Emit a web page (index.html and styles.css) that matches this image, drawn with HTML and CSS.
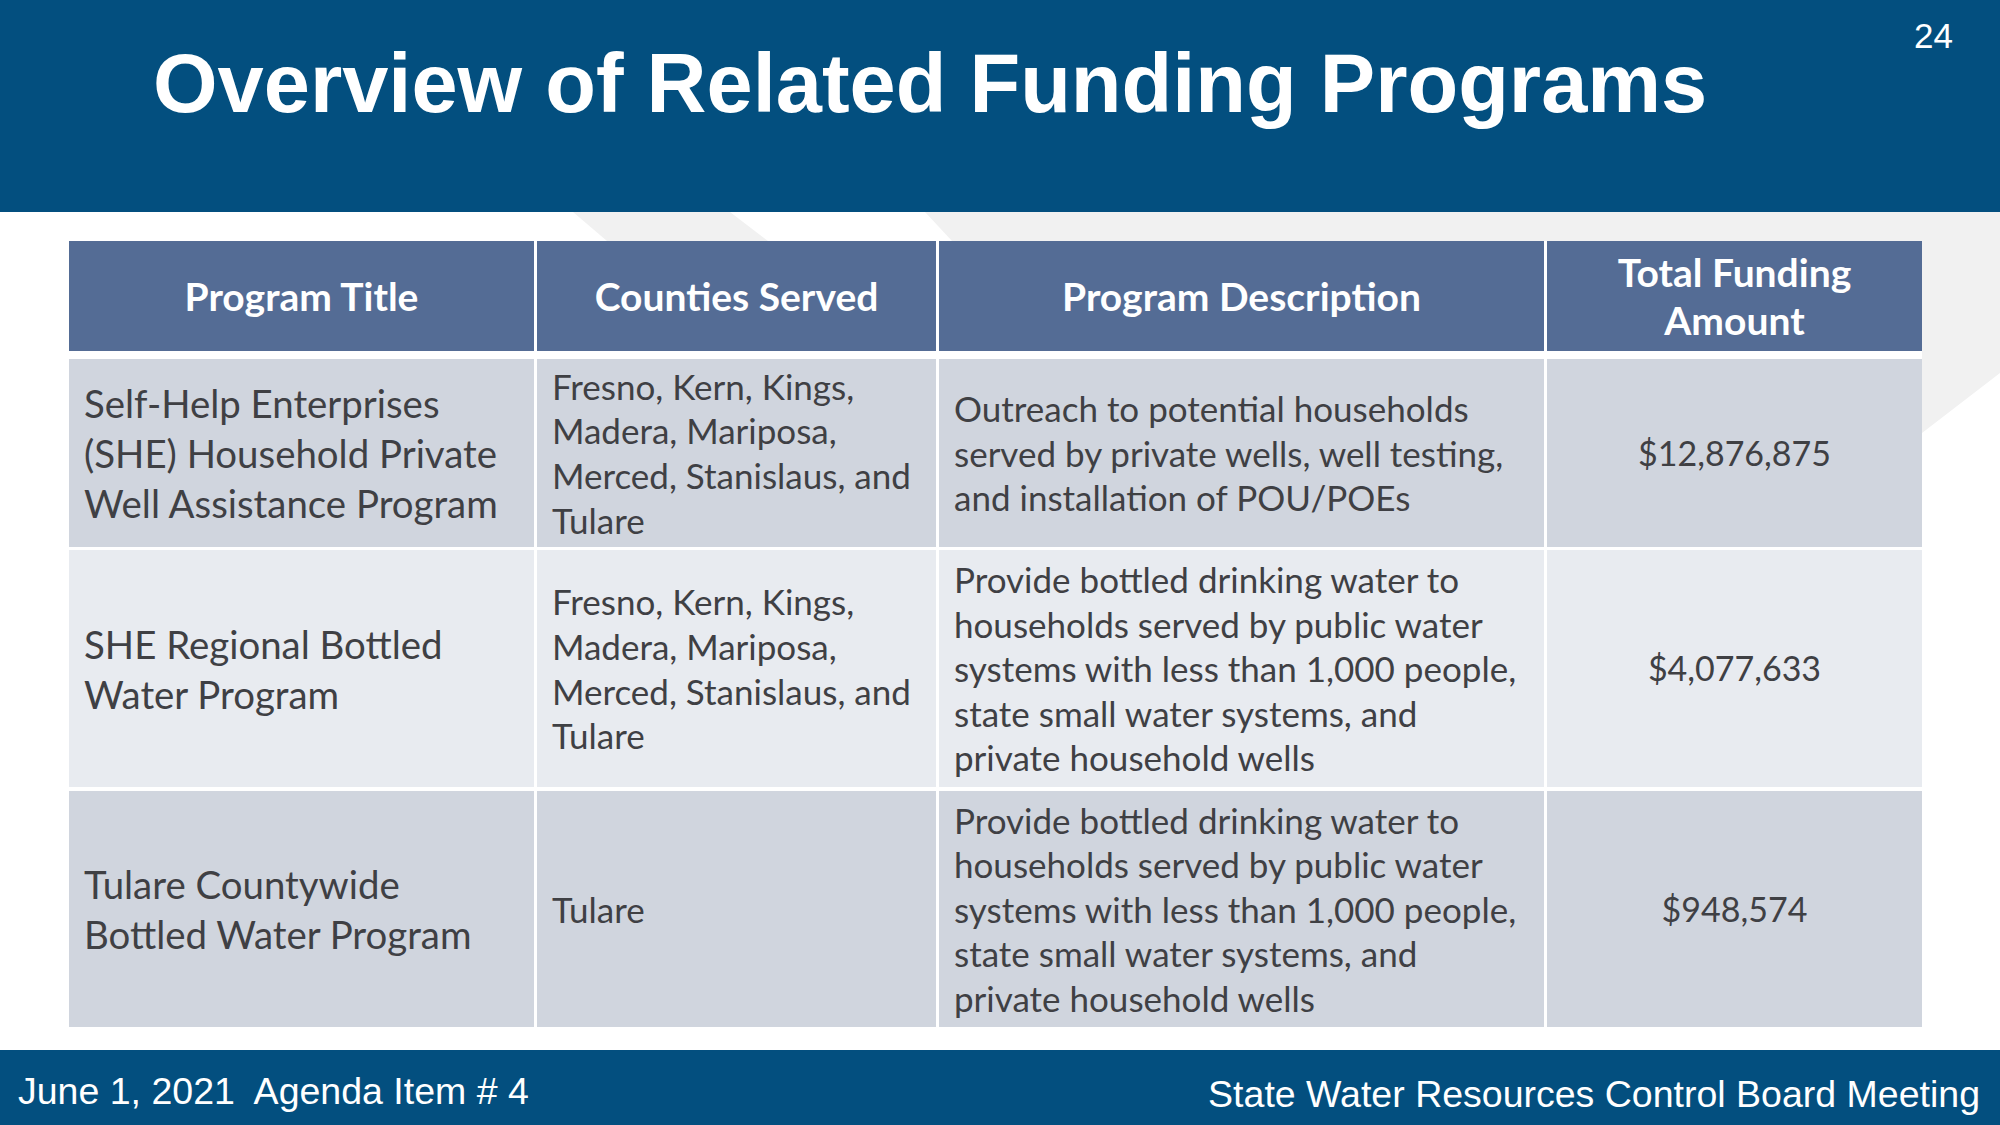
FILE: index.html
```html
<!DOCTYPE html>
<html lang="en">
<head>
<meta charset="utf-8">
<title>Overview of Related Funding Programs</title>
<link rel="stylesheet" href="styles.css">
</head>
<body>
<div class="slide">
  <header class="top">
    <h1 class="title">Overview of Related Funding Programs</h1>
    <div class="page-num">24</div>
  </header>
  <main class="content">
    <svg class="backdrop" width="2000" height="838" viewBox="0 0 2000 838" aria-hidden="true">
      <polygon points="573,0 730,0 768,29 607,29" fill="#f1f1f1"/>
      <polygon points="925,0 2000,0 2000,161 1922,221 1922,29 952,29" fill="#f1f1f1"/>
    </svg>
    <div class="table">
      <div class="row head">
        <div class="cell">Program Title</div>
        <div class="cell">Counties Served</div>
        <div class="cell">Program Description</div>
        <div class="cell">Total Funding<br>Amount</div>
      </div>
      <div class="row odd r1">
        <div class="cell name">Self-Help Enterprises<br>(SHE) Household Private<br>Well Assistance Program</div>
        <div class="cell">Fresno, Kern, Kings,<br>Madera, Mariposa,<br>Merced, Stanislaus, and<br>Tulare</div>
        <div class="cell">Outreach to potential households<br>served by private wells, well testing,<br>and installation of POU/POEs</div>
        <div class="cell amount">$12,876,875</div>
      </div>
      <div class="row even r2">
        <div class="cell name">SHE Regional Bottled<br>Water Program</div>
        <div class="cell">Fresno, Kern, Kings,<br>Madera, Mariposa,<br>Merced, Stanislaus, and<br>Tulare</div>
        <div class="cell">Provide bottled drinking water to<br>households served by public water<br>systems with less than 1,000 people,<br>state small water systems, and<br>private household wells</div>
        <div class="cell amount">$4,077,633</div>
      </div>
      <div class="row odd r3">
        <div class="cell name">Tulare Countywide<br>Bottled Water Program</div>
        <div class="cell">Tulare</div>
        <div class="cell">Provide bottled drinking water to<br>households served by public water<br>systems with less than 1,000 people,<br>state small water systems, and<br>private household wells</div>
        <div class="cell amount">$948,574</div>
      </div>
    </div>
  </main>
  <footer class="bottom">
    <div class="foot-left">June 1, 2021&nbsp; Agenda Item # 4</div>
    <div class="foot-right">State Water Resources Control Board Meeting</div>
  </footer>
</div>
</body>
</html>
```
FILE: styles.css
```css
html, body {
  margin: 0;
  padding: 0;
  background: #ffffff;
}

.slide {
  width: 2000px;
  height: 1125px;
  display: flex;
  flex-direction: column;
  overflow: hidden;
  font-family: "Liberation Sans", Arial, sans-serif;
}

.top {
  height: 212px;
  flex: none;
  background: #034f7f;
  color: #ffffff;
  display: flex;
  justify-content: space-between;
  align-items: flex-start;
  padding: 0 47px 0 153px;
  box-sizing: border-box;
}

.title {
  margin: 0;
  padding-top: 42px;
  font-size: 83px;
  line-height: 1;
  font-weight: bold;
  letter-spacing: 0;
}

.page-num {
  margin-top: 18px;
  font-size: 35px;
  line-height: 1;
}

.content {
  flex: 1;
  position: relative;
  padding: 29px 0 0 69px;
  box-sizing: border-box;
}

.backdrop {
  position: absolute;
  left: 0;
  top: 0;
  z-index: 0;
}

.table {
  position: relative;
  z-index: 1;
  width: 1853px;
  display: flex;
  flex-direction: column;
  gap: 3px;
  background: #ffffff;
  font-family: Lato, "Open Sans", sans-serif;
  color: #3f4044;
}

.row {
  display: grid;
  grid-template-columns: 465px 399px 605px 375px;
  column-gap: 3px;
}

.cell {
  display: flex;
  align-items: center;
  padding: 0 15px;
  white-space: nowrap;
  font-size: 35px;
  line-height: 44.6px;
}

.head {
  height: 110px;
  margin-bottom: 5px;
}

.head .cell {
  background: #546c95;
  color: #ffffff;
  font-weight: bold;
  font-size: 39px;
  line-height: 48.5px;
  justify-content: center;
  text-align: center;
}

.r1 { height: 188px; }
.r2 { height: 237px; margin-bottom: 1px; }
.r3 { height: 236px; }

.odd .cell { background: #d0d5de; }
.even .cell { background: #e8ebf0; }

.cell.name {
  font-size: 38.4px;
  line-height: 50px;
}

.cell.amount {
  justify-content: center;
  font-size: 34px;
}

.bottom {
  height: 75px;
  flex: none;
  background: #034f7f;
  color: #ffffff;
  display: flex;
  justify-content: space-between;
  align-items: flex-start;
  padding: 0 20px 0 18px;
  box-sizing: border-box;
  font-size: 37.5px;
  line-height: 1;
}

.foot-left { padding-top: 23px; }
.foot-right { padding-top: 26px; }
```
